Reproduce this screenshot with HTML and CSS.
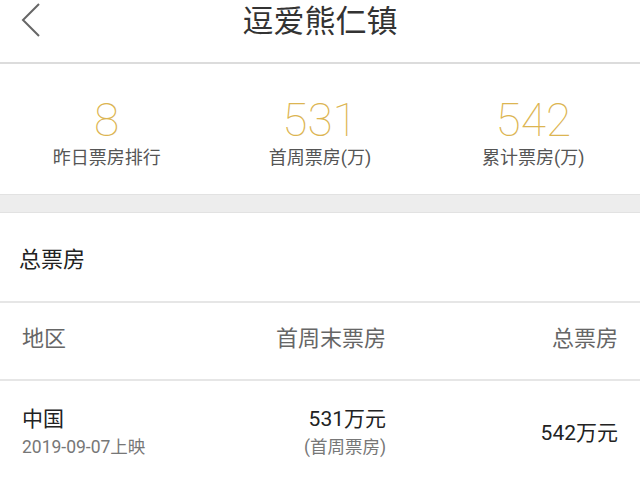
FILE: index.html
```html
<!DOCTYPE html>
<html lang="zh-CN">
<head>
    <meta charset="UTF-8">
    <meta name="viewport" content="width=device-width, initial-scale=1.0">
    <title>逗爱熊仁镇</title>
    <link rel="stylesheet" href="styles.css">
</head>
<body>
    <header class="navbar">
        <a class="back" href="#">
            <svg width="22" height="36" viewBox="0 0 22 36">
                <polyline points="19,2 3,18 19,34" fill="none" stroke="#666" stroke-width="2"/>
            </svg>
        </a>
        <h1 class="title">逗爱熊仁镇</h1>
        <span></span>
    </header>

    <!-- summary numbers -->
    <section class="stats">
        <div class="stat">
            <div class="stat-num">8</div>
            <div class="stat-label">昨日票房排行</div>
        </div>
        <div class="stat">
            <div class="stat-num">531</div>
            <div class="stat-label">首周票房(万)</div>
        </div>
        <div class="stat">
            <div class="stat-num">542</div>
            <div class="stat-label">累计票房(万)</div>
        </div>
    </section>

    <div class="divider"></div>

    <section class="boxoffice">
        <h2 class="section-title">总票房</h2>
        <div class="row head">
            <div>地区</div>
            <div class="right">首周末票房</div>
            <div class="right">总票房</div>
        </div>
        <div class="row">
            <div>
                <div class="main">中国</div>
                <div class="sub">2019-09-07上映</div>
            </div>
            <div class="right">
                <div class="main">531万元</div>
                <div class="sub">(首周票房)</div>
            </div>
            <div class="right main">542万元</div>
        </div>
    </section>
</body>
</html>
```

FILE: styles.css
```css
body {
    margin: 0;
    background: #fff;
    font-family: Roboto, "Noto Sans CJK SC", sans-serif;
    color: #222;
}
.navbar {
    display: grid;
    grid-template-columns: 1fr auto 1fr;
    align-items: start;
    height: 62px;
    padding: 0 20px;
    border-bottom: 2px solid #dcdcdc;
}
.back {
    display: block;
    width: 22px;
    height: 36px;
    margin-top: 2px;
}
.title {
    margin: 0;
    font-size: 31px;
    font-weight: 400;
    line-height: 43px;
    color: #333;
}
.stats {
    display: grid;
    grid-template-columns: 1fr 1fr 1fr;
    padding: 33px 0 24px;
    text-align: center;
}
.stat-num {
    font-size: 46px;
    line-height: 46px;
    font-weight: 100;
    color: #dcb552;
}
.stat-label {
    margin-top: 3px;
    font-size: 18px;
    line-height: 24px;
    color: #555;
}
.divider {
    height: 17px;
    background: #ededed;
    border-top: 1px solid #e2e2e2;
    border-bottom: 1px solid #e2e2e2;
}
.section-title {
    margin: 0;
    height: 88px;
    display: flex;
    align-items: center;
    padding-left: 19px;
    font-size: 22px;
    font-weight: 400;
    color: #222;
    border-bottom: 2px solid #e6e6e6;
}
.row {
    display: grid;
    grid-template-columns: 214px 150px 1fr;
    align-items: center;
    padding: 24px 22px 26px;
}
.row.head {
    padding-top: 22px;
    font-size: 22px;
    line-height: 28px;
    color: #666;
    border-bottom: 2px solid #e6e6e6;
}
.right {
    text-align: right;
}
.main {
    font-size: 21px;
    line-height: 28px;
    color: #222;
}
.sub {
    font-size: 17.5px;
    line-height: 28px;
    color: #777;
}
```
